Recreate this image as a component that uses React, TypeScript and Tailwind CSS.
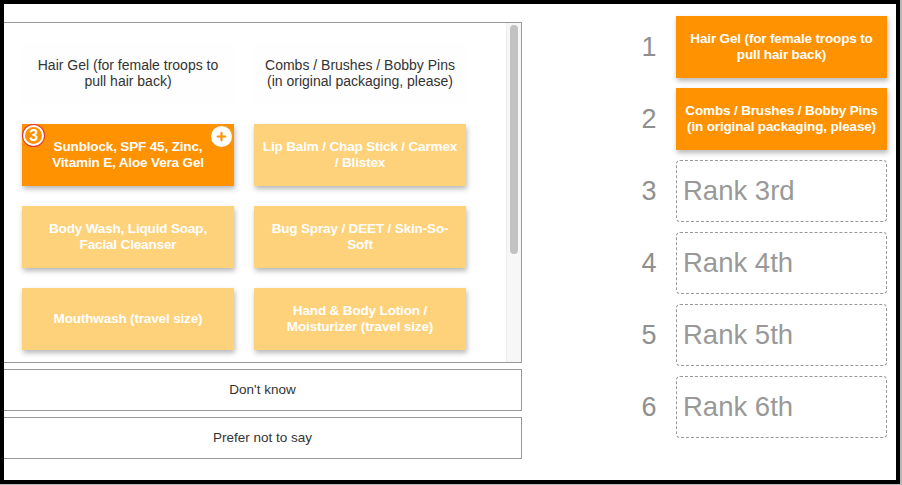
import { Plus } from "lucide-react";

const tiles = [
    { lines: ["Sunblock, SPF 45, Zinc,", "Vitamin E, Aloe Vera Gel"], rank: 3 },
    { lines: ["Lip Balm / Chap Stick / Carmex", "/ Blistex"] },
    { lines: ["Body Wash, Liquid Soap,", "Facial Cleanser"] },
    { lines: ["Bug Spray / DEET / Skin-So-", "Soft"] },
    { lines: ["Mouthwash (travel size)"] },
    { lines: ["Hand & Body Lotion /", "Moisturizer (travel size)"] },
];

const ranked = [
    ["Hair Gel (for female troops to", "pull hair back)"],
    ["Combs / Brushes / Bobby Pins", "(in original packaging, please)"],
];

const slots = ["Rank 3rd", "Rank 4th", "Rank 5th", "Rank 6th"];

function Lines({ lines }: { lines: string[] }) {
    return (
        <div className="flex flex-col items-center">
            {lines.map((l) => (
                <span key={l} className="whitespace-nowrap">
                    {l}
                </span>
            ))}
        </div>
    );
}

function Tile({ lines, rank }: { lines: string[]; rank?: number }) {
    const active = rank !== undefined;
    return (
        <div
            className={`relative h-[62px] flex items-center justify-center text-center text-[13.5px] leading-[16px] font-bold tracking-[-0.15px] text-white shadow-[1px_3px_5px_rgba(0,0,0,0.28)] ${
                active ? "bg-[#ff9200]" : "bg-[#fed27a]"
            }`}
        >
            {active && (
                <>
                    <span className="absolute left-[1px] top-[1px] w-[21px] h-[21px] rounded-full bg-[#ff9200] border-2 border-white ring-1 ring-[#e8322b] flex items-center justify-center text-[16px] font-bold leading-none">
                        {rank}
                    </span>
                    <span className="absolute right-[2px] top-[2px] w-[21px] h-[21px] rounded-full bg-white flex items-center justify-center">
                        <Plus className="w-[13px] h-[13px] text-[#ff9200]" strokeWidth={4} />
                    </span>
                </>
            )}
            <Lines lines={lines} />
        </div>
    );
}

export default function App() {
    return (
        <div
            className="w-[902px] h-[485px] bg-[#b8b8b8]"
            style={{ fontFamily: '"Liberation Sans", Arial, sans-serif' }}
        >
            <div className="w-[900px] h-[484px] border-4 border-black bg-white flex">
                {/* 左侧：选项与按钮 */}
                <div className="w-[518px] pt-[18px] flex flex-col">
                    <div className="h-[341px] border-t border-r border-b border-[#999] flex overflow-hidden">
                        <div className="flex-1 overflow-hidden pl-[18px] pt-[19px]">
                            <div className="grid grid-cols-[212px_212px] gap-x-[20px] gap-y-[20px]">
                                {ranked.map((r) => (
                                    <div
                                        key={r[0]}
                                        className="h-[62px] flex items-center justify-center text-center text-[14px] leading-[16px] text-[#333] bg-[#fefefe]"
                                    >
                                        <Lines lines={r} />
                                    </div>
                                ))}
                                {tiles.map((t) => (
                                    <Tile key={t.lines[0]} lines={t.lines} rank={t.rank} />
                                ))}
                            </div>
                        </div>
                        {/* 滚动条 */}
                        <div className="w-[15px] bg-[#f7f7f7] border-l border-[#ececec] flex justify-center">
                            <div className="w-[8px] h-[229px] mt-[2px] rounded-full bg-[#c2c2c2]" />
                        </div>
                    </div>
                    <div className="mt-[6px] h-[42px] border-t border-r border-b border-[#999] flex items-center justify-center text-[13.5px] text-[#333]">
                        Don't know
                    </div>
                    <div className="mt-[6px] h-[42px] border-t border-r border-b border-[#999] flex items-center justify-center text-[13.5px] text-[#333]">
                        Prefer not to say
                    </div>
                </div>

                {/* 右侧：排名 */}
                <div className="ml-[112px] pt-[12px] flex flex-col gap-[10px]">
                    {ranked.map((r, i) => (
                        <div key={r[0]} className="flex items-center">
                            <span className="w-[30px] mr-[12px] text-center text-[27px] text-[#8f8f8f]">{i + 1}</span>
                            <div className="w-[211px] h-[62px] bg-[#ff9200] flex items-center justify-center text-center text-[13.5px] leading-[16px] font-bold tracking-[-0.15px] text-white shadow-[1px_3px_5px_rgba(0,0,0,0.28)]">
                                <Lines lines={r} />
                            </div>
                        </div>
                    ))}
                    {slots.map((s, i) => (
                        <div key={s} className="flex items-center">
                            <span className="w-[30px] mr-[12px] text-center text-[27px] text-[#8f8f8f]">{i + 3}</span>
                            <div className="w-[211px] h-[62px] border border-dashed border-[#999] rounded-[4px] flex items-center pl-[6px] text-[27.5px] text-[#999]">
                                {s}
                            </div>
                        </div>
                    ))}
                </div>
            </div>
        </div>
    );
}
